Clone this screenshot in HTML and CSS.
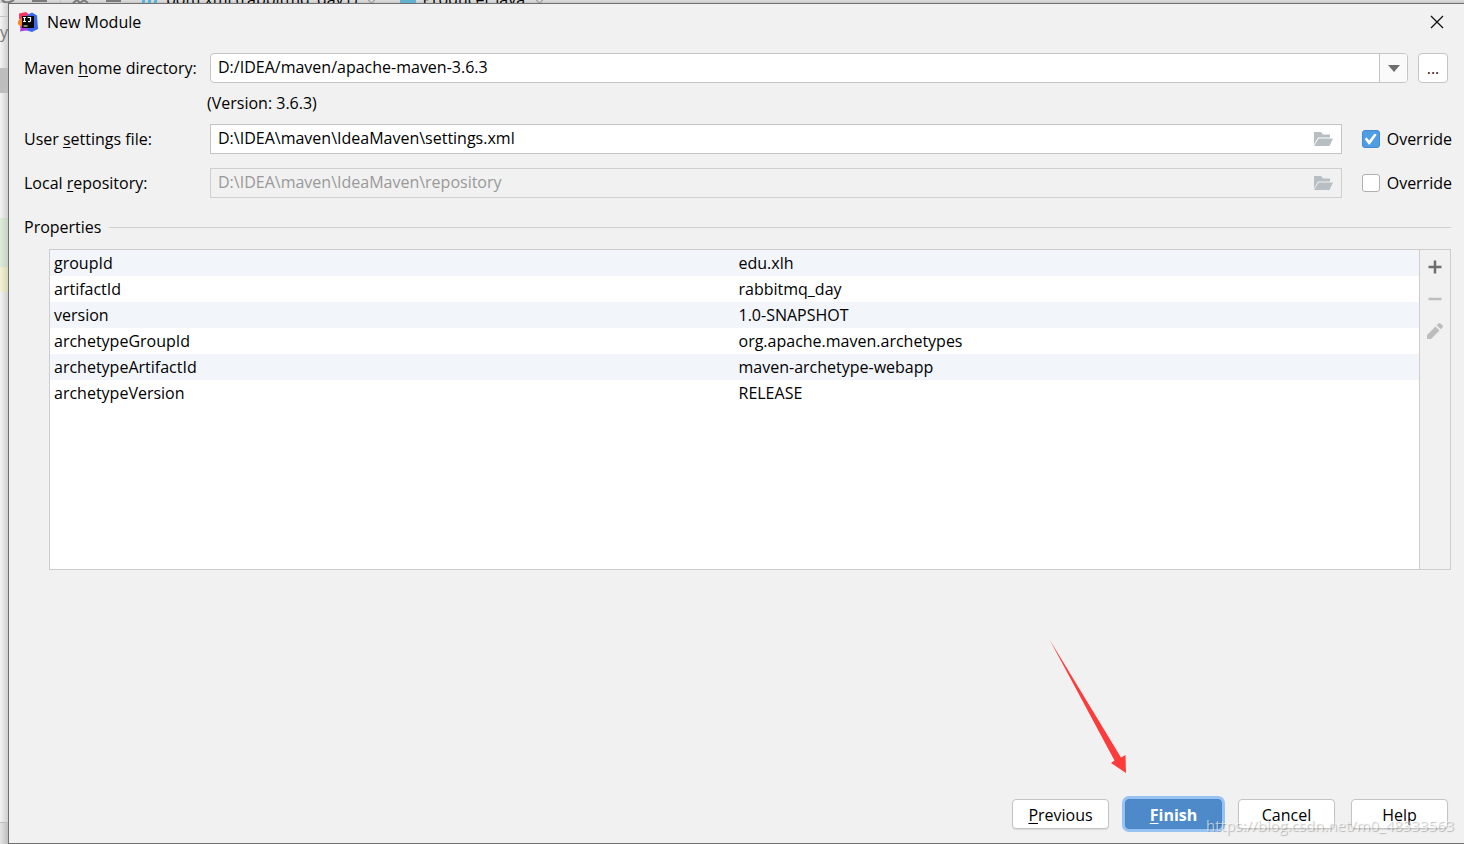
FILE: index.html
```html
<!DOCTYPE html>
<html lang="en">
<head>
<meta charset="utf-8">
<title>New Module</title>
<link rel="stylesheet" href="styles.css">
</head>
<body>
<div class="ide-top" aria-hidden="true">
  <svg class="ide-tools" width="140" height="3" viewBox="0 0 140 3" fill="none" stroke="#7a7a7a" stroke-width="2">
    <path d="M2 0q4 5 12 0M32 1h15M73 3l4-3 3 3 4-3 4 3M106 1h15"/><path d="M60.500 0v3" stroke="#c4c4c4" stroke-width="1"/>
  </svg>
  <svg class="ide-m" width="20" height="3" viewBox="0 0 20 3"><path d="M3 3l1-3M9 3l1-3M15 3l1-3" stroke="#4fb0d8" stroke-width="3"/></svg>
  <span class="ide-tab">pom.xml (rabbitmq_day1)</span>
  <span class="ide-caret"></span>
  <span class="ide-class"></span>
  <span class="ide-tab">Producer.java</span>
  <span class="ide-caret"></span>
</div>
<div class="ide-side" aria-hidden="true">
  <div class="side-bar"></div>
  <div class="side-crumb">y</div>
  <div class="side-select"></div>
  <div class="side-plain"></div>
  <div class="side-added"></div>
  <div class="side-current"></div>
  <div class="side-fill"></div>
  <div class="side-status"></div>
</div>
<main class="dialog" role="dialog" aria-labelledby="title">
  <header class="titlebar">
    <svg width="20" height="20" viewBox="0 0 20 20" aria-hidden="true">
      <path d="M1 1.500L8 0l5 4-4 12H2l1-5-2-5z" fill="#f9375f"/>
      <path d="M0 9l4-3 3 5-4 4-3-3z" fill="#fb8422"/>
      <path d="M9 3l5-2.500 5 3L20 17l-6 3-7-2z" fill="#3c68ed"/>
      <path d="M2 19.500l1-6 8 4-3 1z" fill="#b43bdb"/>
      <path d="M4 4h12v12H4z" fill="#080808"/>
      <path d="M5 5.500h3M6.500 5.500v4M5 9.500h3M9.500 5.500h3v3q0 1.500-2.500 1M5.500 14h4" stroke="#fff" stroke-width="1.200" fill="none"/>
    </svg>
    <h1 class="title" id="title">New Module</h1>
    <button class="close" type="button" aria-label="Close">
      <svg width="14" height="14" viewBox="0 0 14 14"><path d="M1 1l12 12M13 1L1 13" stroke="#111" stroke-width="1.300"/></svg>
    </button>
  </header>
  <form class="form">
    <div class="row row-home">
      <label class="label" for="home">Maven <u>h</u>ome directory:</label>
      <div class="combo">
        <input class="input" id="home" type="text" value="D:/IDEA/maven/apache-maven-3.6.3">
        <button class="drop" type="button" aria-label="Show list">
          <svg width="12" height="7" viewBox="0 0 12 7"><path d="M0 0h12L6 7z" fill="#6e6e6e"/></svg>
        </button>
      </div>
      <button class="browse" type="button">...</button>
    </div>
    <p class="version">(Version: 3.6.3)</p>
    <div class="row">
      <label class="label" for="settings">User <u>s</u>ettings file:</label>
      <div class="path">
        <input class="input" id="settings" type="text" value="D:\IDEA\maven\IdeaMaven\settings.xml">
        <svg class="folder" width="20" height="14" viewBox="0 0 20 14"><path d="M0 0h7l2 2.500h7v3H4L0 12.500z" fill="#b8bfc3"/><path d="M4.500 6.500H19L15.500 14H0z" fill="#b8bfc3"/></svg>
      </div>
      <label class="check"><input class="box" type="checkbox" checked>Override</label>
    </div>
    <div class="row">
      <label class="label" for="repo">Local <u>r</u>epository:</label>
      <div class="path path-off">
        <input class="input" id="repo" type="text" value="D:\IDEA\maven\IdeaMaven\repository" disabled>
        <svg class="folder" width="20" height="14" viewBox="0 0 20 14"><path d="M0 0h7l2 2.500h7v3H4L0 12.500z" fill="#b8bfc3"/><path d="M4.500 6.500H19L15.500 14H0z" fill="#b8bfc3"/></svg>
      </div>
      <label class="check"><input class="box" type="checkbox">Override</label>
    </div>
  </form>
  <h2 class="section">Properties</h2>
  <section class="props">
    <div class="sheet">
      <table class="table">
        <tbody>
          <tr><td>groupId</td><td>edu.xlh</td></tr>
          <tr><td>artifactId</td><td>rabbitmq_day</td></tr>
          <tr><td>version</td><td>1.0-SNAPSHOT</td></tr>
          <tr><td>archetypeGroupId</td><td>org.apache.maven.archetypes</td></tr>
          <tr><td>archetypeArtifactId</td><td>maven-archetype-webapp</td></tr>
          <tr><td>archetypeVersion</td><td>RELEASE</td></tr>
        </tbody>
      </table>
    </div>
    <div class="tools">
      <button class="tool" type="button" aria-label="Add"><svg width="18" height="18" viewBox="0 0 18 18"><path d="M9 2.500v13M2.500 9h13" stroke="#6e6e6e" stroke-width="2.500"/></svg></button>
      <button class="tool" type="button" aria-label="Remove" disabled><svg width="18" height="18" viewBox="0 0 18 18"><path d="M2.500 9h13" stroke="#bdbdbd" stroke-width="2.500"/></svg></button>
      <button class="tool" type="button" aria-label="Edit" disabled><svg width="18" height="18" viewBox="0 0 18 18" fill="#bdbdbd"><path d="M1 17v-4l8.500-8.500 4 4L5 17zM10.700 3.300l1.800-1.800q1-.9 2 0l2 2q.9 1 0 2l-1.800 1.800z"/></svg></button>
    </div>
  </section>
  <footer class="footer">
    <button class="btn" type="button"><u>P</u>revious</button>
    <button class="btn btn-main" type="button"><u>F</u>inish</button>
    <button class="btn" type="button">Cancel</button>
    <button class="btn" type="button">Help</button>
    <svg class="arrow" width="78" height="135" viewBox="0 0 78 135" aria-hidden="true"><path d="M.5.500L72 118.500l4.500-2.500.5 18-15-10 3.500-2.500z" fill="#fd3b3b"/></svg>
    <span class="watermark">https://blog.csdn.net/m0_48333563</span>
  </footer>
</main>
</body>
</html>
```
FILE: styles.css
```css
* { box-sizing: border-box; }

body {
  margin: 0;
  height: 100vh;
  display: grid;
  grid-template: 3px minmax(0, 1fr) / 8px minmax(0, 1fr);
  background: #f2f2f2;
  color: #000;
  font: 16px/22px "Open Sans", "Noto Sans", sans-serif;
}

button, input { font: inherit; color: inherit; }
button { padding: 0; cursor: default; }
u { text-underline-offset: 2px; text-decoration-thickness: 1px; }

/* Editor window behind the dialog */
.ide-top {
  grid-column: 1 / -1;
  display: flex;
  align-items: flex-end;
  overflow: hidden;
  height: 3px;
  background: linear-gradient(#dedede, #c6c6c6);
}
.ide-tools, .ide-m { flex: none; }
.ide-tab { flex: none; margin: 0 8px -4px 6px; line-height: 16px; }
.ide-caret { width: 5px; height: 5px; margin: 0 26px 0 4px; border: 1px solid #999; transform: rotate(45deg); }
.ide-class { width: 16px; height: 3px; background: #62b2cf; }

.ide-side {
  display: flex;
  flex-direction: column;
  overflow: hidden;
  background: linear-gradient(90deg, #f4f4f4, #cfcfcf);
}
.side-bar { height: 14px; border-bottom: 1px solid #c4c4c4; }
.side-crumb { height: 51px; padding-top: 4px; color: #777; }
.side-select { height: 25px; background: #bdbdbd; }
.side-plain { height: 125px; }
.side-added { height: 49px; background: linear-gradient(90deg, #deebd9, #c7d3c2); }
.side-current { height: 25px; background: linear-gradient(90deg, #f5f3d3, #d8d6b9); }
.side-fill { flex: 1; }
.side-status { height: 22px; border-top: 1px solid #bdbdbd; background: linear-gradient(90deg, #e4e4e4, #bebebe); }

/* Dialog */
.dialog {
  display: flex;
  flex-direction: column;
  min-width: 0;
  border: 1px solid #707070;
  border-right: 0;
  background: #f1f1f1;
}
.titlebar {
  display: flex;
  align-items: center;
  gap: 9px;
  height: 36px;
  padding: 0 20px 0 9px;
}
.title { flex: 1; margin: 0; font-size: 16px; font-weight: 400; }
.close { display: flex; border: 0; background: none; }

.form {
  display: flex;
  flex-direction: column;
  gap: 14px;
  padding: 13px 12px 0 15px;
}
.row { display: flex; align-items: center; }
.row-home { padding-right: 4px; }
.label { width: 186px; flex: none; }
.combo, .path {
  flex: 1;
  min-width: 0;
  height: 30px;
  display: flex;
  align-items: center;
  border: 1px solid #c4c4c4;
  background: #fff;
}
.combo { border-radius: 4px; overflow: hidden; }
.path-off { background: #f1f1f1; color: #999; border-color: #cfcfcf; }
.input {
  flex: 1;
  min-width: 0;
  height: 26px;
  padding: 0 7px 2px;
  border: 0;
  outline: 0;
  background: none;
}
.drop {
  display: flex;
  align-items: center;
  justify-content: center;
  width: 28px;
  height: 28px;
  border: 0;
  border-left: 1px solid #c4c4c4;
  background: #fafafa;
}
.browse {
  width: 30px;
  height: 30px;
  margin-left: 10px;
  border: 1px solid #c4c4c4;
  border-radius: 4px;
  background: #fff;
  color: #3b0f0f;
}
.version { margin: -5px 0 -4px 183px; }
.folder { margin: 0 7px; }
.check { display: flex; align-items: center; gap: 7px; margin-left: 20px; }
.box {
  appearance: none;
  width: 18px;
  height: 18px;
  margin: 0;
  border: 1px solid #b0b0b0;
  border-radius: 3px;
  background: #fff;
}
.box:checked {
  display: grid;
  place-items: center;
  border-color: #4289cf;
  background: #4f9ee3;
}
.box:checked::before {
  content: "";
  width: 12px;
  height: 11px;
  background: #fff;
  clip-path: polygon(0 50%, 16% 36%, 38% 64%, 82% 0, 100% 12%, 42% 100%, 34% 100%);
}

.section {
  display: flex;
  align-items: center;
  gap: 8px;
  margin: 18px 13px 11px 15px;
  font-size: 16px;
  font-weight: 400;
}
.section::after { content: ""; flex: 1; height: 1px; background: #d0d0d0; }

.props {
  display: flex;
  flex: 0 1 321px;
  margin: 0 13px 0 40px;
  border: 1px solid #cdcdcd;
}
.sheet { flex: 1; background: #fff; border-right: 1px solid #cdcdcd; }
.table { width: 100%; table-layout: fixed; border-collapse: collapse; }
.table td { height: 26px; padding: 2px 4px; }
.table tr:nth-child(odd) { background: #f2f5fa; }
.tools { display: flex; flex-direction: column; align-items: center; gap: 14px; width: 30px; padding-top: 8px; }
.tool { display: flex; border: 0; background: none; }

.footer {
  position: relative;
  display: flex;
  justify-content: flex-end;
  gap: 16px;
  margin-top: auto;
  padding: 0 16px 14px;
}
.btn {
  width: 97px;
  height: 30px;
  padding-top: 2px;
  border: 1px solid #c4c4c4;
  border-radius: 4px;
  background: #fff;
  box-shadow: 0 1px 1px #d8d8d8;
}
.btn-main {
  border-color: #4a86c5;
  background: #4e8aca;
  box-shadow: 0 0 0 3px #97c3f3;
  color: #fff;
  font-weight: 700;
}
.arrow { position: absolute; right: 337px; bottom: 69px; }
.watermark {
  position: absolute;
  right: 10px;
  bottom: 7px;
  font-size: 15px;
  color: rgba(255, 255, 255, 0.6);
  text-shadow: 1px 1px 1px rgba(0, 0, 0, 0.25);
  pointer-events: none;
}
```
